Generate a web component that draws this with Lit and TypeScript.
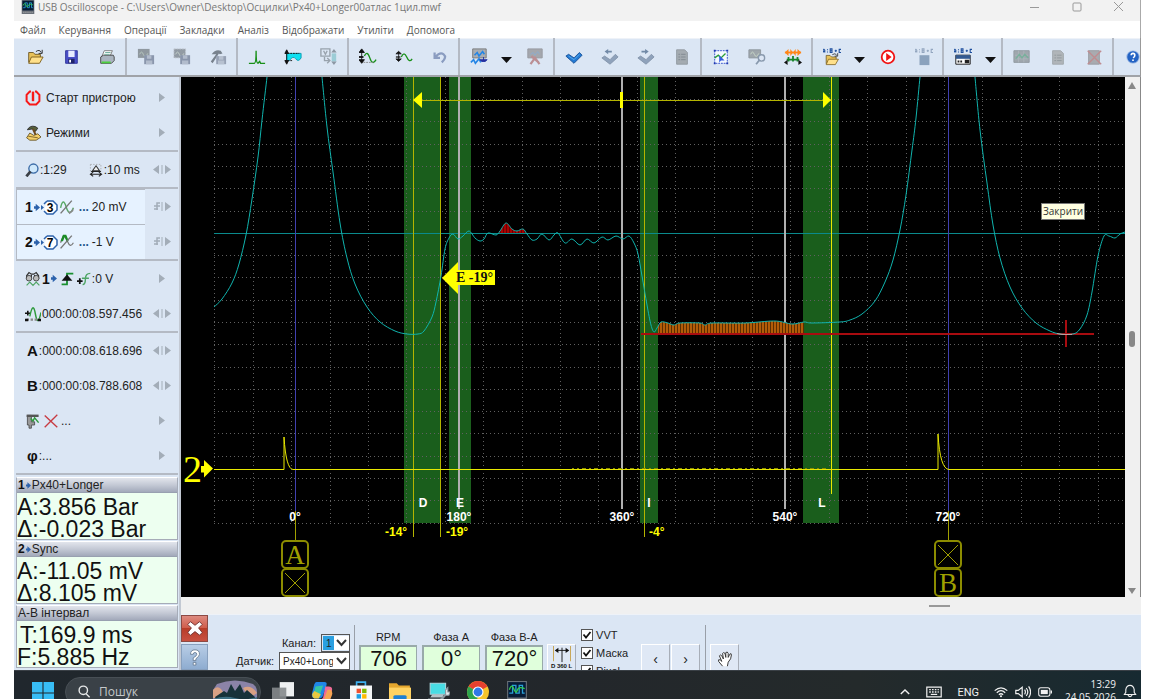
import { LitElement, html, svg, css } from "lit";
import { customElement } from "lit/decorators.js";

type Pt = [number, number];

/* Smooth curve through sample points (Catmull-Rom as cubic Bezier). */
function trace(points: Pt[]): string {
  let d = `M${points[0][0]} ${points[0][1]}`;
  for (let i = 0; i < points.length - 1; i++) {
    const a = points[Math.max(i - 1, 0)];
    const b = points[i];
    const c = points[i + 1];
    const e = points[Math.min(i + 2, points.length - 1)];
    const f = (n: number) => n.toFixed(1);
    d += `C${f(b[0] + (c[0] - a[0]) / 6)} ${f(b[1] + (c[1] - a[1]) / 6)} ${f(c[0] - (e[0] - b[0]) / 6)} ${f(c[1] - (e[1] - b[1]) / 6)} ${c[0]} ${c[1]}`;
  }
  return d;
}

const rise: Pt[] = [[214, 307], [222, 299], [232, 283], [239, 264], [246, 235], [252, 199], [258, 157], [262, 120], [267, 77]];
const cycle: Pt[] = [
  [322, 77], [327, 127], [333, 172], [340, 223], [347, 258], [355, 284], [367, 307], [380, 322], [395, 331], [407, 334],
  [418, 334], [424, 331], [432, 317], [436, 302], [441, 276], [445, 249], [449, 238], [453, 234], [458, 239], [463, 236],
  [469, 231], [475, 238], [480, 241], [484, 239], [488, 233], [496, 235], [500, 231], [506, 223], [512, 229], [517, 231],
  [523, 229], [527, 234], [532, 240], [537, 239], [542, 234], [549, 240], [554, 235], [558, 233], [565, 243], [572, 239],
  [580, 245], [587, 239], [594, 243], [602, 237], [608, 240], [616, 236], [623, 239], [629, 236], [634, 243], [638, 254],
  [642, 276], [647, 305], [651, 325], [654, 332], [657, 328], [661, 322], [668, 323], [674, 325], [680, 323], [700, 323],
  [705, 325], [712, 323], [745, 323], [775, 321], [792, 324], [804, 322], [812, 323], [840, 322], [850, 320], [862, 314],
  [875, 301], [885, 282], [893, 260], [900, 230], [906, 195], [912, 150], [916, 118], [920, 77]];
const next: Pt[] = [
  [975, 77], [980, 130], [987, 183], [993, 225], [1000, 258], [1010, 287], [1022, 308], [1036, 323], [1050, 331], [1060, 334],
  [1073, 334], [1080, 329], [1087, 315], [1092, 292], [1098, 256], [1104, 236], [1109, 236], [1115, 238], [1120, 234], [1125, 232]];

const columns = Array.from({ length: 24 }, (_, i) => 214.3 + i * 38.4);
const rows = Array.from({ length: 20 }, (_, i) => 99.7 + i * 22.28);
const noise = Array.from({ length: 64 }, (_, i) => 572 + i * 4 + ((i * 7) % 3));

const scaleSvg = svg`<path d="M5 3v12M5 1l-3 4h6zM5 17l-3-4h6z" fill="#111" stroke="#111"/><path d="M2 10h5" stroke="#111" stroke-width="2"/>`;
const abc = (c: string) => svg`<g stroke=${c} fill="none" stroke-width="1.2"><path d="M0 5V2.500l1-1 1 1V5M0 4h2M8 5V1h2v4zM8 3h2M13 3h2.500M14.200 2v2.500M20 1.500h-2V5h2"/><path d="M5 1.500v1M5 4v1"/></g>`;

const glyphs: Record<string, unknown> = {
  open: svg`<path d="M3 16V5h5l2 2h6v3" fill="#e8c25a" stroke="#6b5520"/><path d="M3 17l3-7h13l-4 7z" fill="#ffe08a" stroke="#7a5c18"/><path d="M11 4q4-3 6 1m1-3v4h-4" fill="none" stroke="#222"/>`,
  save: svg`<path d="M4 3h13v14H4z" fill="#4a4fc8" stroke="#30349a"/><path d="M7 3h7v7H7z" fill="#e8ecff"/><path d="M7 12h7v5H7z" fill="#20246a"/><path d="M8 13h2v3H8z" fill="#fff"/>`,
  print: svg`<path d="M7 3h9l-3 7H4z" fill="#fff" stroke="#777"/><path d="M3 10l3-2h11l1 2v4l-3 3H3z" fill="#aab4c0" stroke="#444"/><path d="M4 15h10v2H4z" fill="#4bd13c"/><path d="M8 5h6M7 7h6" stroke="#6a9"/>`,
  copyA: svg`<path d="M1 1h13v10H1z" fill="#8f989f"/><path d="M3 7q2-5 4 0t5-1" fill="none" stroke="#b9cabf"/><path d="M8 8h11v10H8z" fill="#8a96ac"/><path d="M11 8h5v4h-5zM10 14h7v4h-7z" fill="#b2bccc"/>`,
  copyB: svg`<path d="M1 1h13v10H1z" fill="#929ba4" stroke="#c3cad2" stroke-dasharray="2 1"/><path d="M3 7q2-5 4 0t5-1" fill="none" stroke="#c6d2cc"/><path d="M8 8h11v10H8z" fill="#8a96ac"/><path d="M11 8h5v4h-5zM10 14h7v4h-7z" fill="#b2bccc"/>`,
  hammer: svg`<path d="M3 7q4-6 10-4l2 3-3 1-1-1L4 17l-2-2 6-8z" fill="#78828d"/><path d="M8 9h11v9H8z" fill="#96a1b4"/><path d="M11 9h5v4h-5zM10 14h7v4h-7z" fill="#b7c1d0"/>`,
  impulse: svg`<path d="M1 17h6q2 0 2-14q0 14 2 14l2-2 1 2h5" fill="none" stroke="#189018" stroke-width="1.500"/>`,
  range: svg`<path d="M3 6h16v5q-3 5-6 1T6 14H3z" fill="#0fe0f0" stroke="#0b9ab0"/><path d="M3 3v14M3 2l-2 4h4zM3 18l-2-4h4z" fill="#111" stroke="#111"/><path d="M1 6h16M1 14h8" stroke="#111" stroke-dasharray="2 1"/>`,
  convert: svg`<path d="M1 1h10v8H1zM5 10v4h5" fill="none" stroke="#98a2ac" stroke-width="1.500"/><path d="M4 3l2 4 2-4M8 11l3 3-3 3" fill="none" stroke="#98a2ac" stroke-width="1.500"/><path d="M13 6h5v9h-5z" fill="#9cccd6"/><path d="M15.500 1l3 4h-6zM15.500 19l3-4h-6z" fill="#8d98a4"/>`,
  stretch: svg`<g transform="translate(-2 0)">${scaleSvg}</g><path d="M6 9q3-7 6 2t7 2" fill="none" stroke="#189018" stroke-width="1.500"/><path d="M5 16h12" stroke="#888" stroke-dasharray="2 1"/>`,
  squeeze: svg`<g transform="translate(-1 3) scale(1 .7)">${scaleSvg}</g><path d="M7 10q3-7 6 0t6 2" fill="none" stroke="#189018" stroke-width="1.500"/>`,
  undo: svg`<path d="M4 5v6h6M5 10q5-6 9-3t-2 9" fill="none" stroke="#8a9cc0" stroke-width="2.500"/>`,
  wave: svg`<path d="M3 1h15v10H3z" fill="#a9adb2" stroke="#777"/><path d="M5 8l3-3 2 4 4-5 2 3" fill="none" stroke="#2385e6" stroke-width="1.800"/><path d="M1 16l3-3 2 4 4-5 2 4" fill="none" stroke="#2385e6" stroke-width="1.800"/><path d="M11 13h8l-2 2h-4zM15 10v4" fill="#2430a0" stroke="#2430a0"/>`,
  waveOff: svg`<path d="M2 1h16v10H2z" fill="#a4a7ad" stroke="#979aa0"/><path d="M5 7l3-2 2 3 3-4 2 3" fill="none" stroke="#8cadcf"/><path d="M5 18l5-7 5 7M6 9l8 7" fill="none" stroke="#bb8f94" stroke-width="2.500"/>`,
  check: svg`<path d="M1 9l3-2 6 4 6-6 3 3-9 9z" fill="#237ad3" stroke="#164f96"/><path d="M4 9l6 4 6-6" fill="none" stroke="#5cabec"/>`,
  checkPrev: svg`<path d="M1 11l3-2 6 4 6-6 3 3-9 8z" fill="#8fa2bb" stroke="#8495ab"/><path d="M4 4l4-3v2h4v2H8v2z" fill="#7189a6"/>`,
  checkNext: svg`<path d="M1 11l3-2 6 4 6-6 3 3-9 8z" fill="#8fa2bb" stroke="#8495ab"/><path d="M13 4L9 1v2H5v2h4v2z" fill="#7189a6"/>`,
  doc: svg`<path d="M4 2h9l3 3v13H4z" fill="#a4abb1" stroke="#929aa2"/><path d="M6 7h2m1 0h5M6 10h2m1 0h5M6 13h2m1 0h5" stroke="#7f8890"/>`,
  select: svg`<path d="M3 3h14v14H3z" fill="#f5f9ff" stroke="#2b48c8" stroke-dasharray="2 1"/><path d="M3 11l4-3 3 3 5-5" fill="none" stroke="#2a9d36" stroke-width="1.500"/><path d="M2 2h2v2H2zM16 2h2v2h-2zM2 16h2v2H2zM16 16h2v2h-2z" fill="#2038b0"/><path d="M8 8v8l2-2h4z" fill="#345cdf"/>`,
  inspect: svg`<path d="M1 2h13v9H1z" fill="#9ea6ab" stroke="#8c959c"/><path d="M3 7q2-5 4 0t5-1" fill="none" stroke="#c8d8c8"/><circle cx="15" cy="11" r="3.500" fill="#dce6f4" stroke="#8899ad" stroke-width="1.500"/><path d="M13 13l-4 5" stroke="#8899ad" stroke-width="2"/>`,
  compare: svg`<path d="M1 5l4-4v8zM19 5l-4-4v8zM10 5L7 1v8zM10 5l3-4v8z" fill="#ff8617"/><path d="M1 5h18" stroke="#ff8617" stroke-width="2"/><path d="M3 13h14M5 10v5M10 9v6M15 10v5" stroke="#168428" stroke-width="2"/><path d="M0 16l4-3v6zM20 16l-4-3v6z" fill="#111"/>`,
  preset: svg`${abc("#1e4f9e")}<g transform="translate(1 4) scale(.85)"><path d="M3 16V5h5l2 2h6v3" fill="#e8c25a" stroke="#6b5520"/><path d="M3 17l3-7h13l-4 7z" fill="#ffe08a" stroke="#7a5c18"/><path d="M11 4q4-3 6 1m1-3v4h-4" fill="none" stroke="#222"/></g>`,
  play: svg`<circle cx="10" cy="10" r="7" fill="#fff" stroke="#f01414" stroke-width="2"/><path d="M8 5.500l6 4.500-6 4.500z" fill="#f01414"/>`,
  stop: svg`${abc("#93a6bf")}<path d="M5 8h11v11H5z" fill="#8ba2bd"/>`,
  calc: svg`${abc("#1e4f9e")}<path d="M2 8h16v10H2z" fill="#fff" stroke="#111"/><path d="M2 8h16v4H2z" fill="#335a92"/><path d="M4 14h2v2H4zM7 14h2v2H7zM12 13h5v4h-5z" fill="#222"/>`,
  chart: svg`<path d="M1 3h17v13H1z" fill="#9fa7ad" stroke="#9099a0"/><path d="M2 8h15M2 12h15M6 3v13M12 3v13" stroke="#adb5bb"/><path d="M3 12l4-5 3 4 3-4 4 4" fill="none" stroke="#78b09c" stroke-width="1.500"/>`,
  page: svg`<path d="M4 3h9l3 3v12H4z" fill="#b0b5b9" stroke="#a0a7ac"/><path d="M6 8h2m1 0h5M6 11h2m1 0h5M6 14h2m1 0h5" stroke="#8e979c"/>`,
  pageOff: svg`<path d="M4 3h12v15H4z" fill="#a8abb0" stroke="#989ca2"/><path d="M3 3l15 15M18 3L3 18" stroke="#bf8c90" stroke-width="1.500"/>`,
  help: svg`<circle cx="10" cy="10" r="7" fill="#2463c4" stroke="#b9cdec"/><path d="M8 8q0-2 2-2t2 2-2 3" fill="none" stroke="#fff" stroke-width="1.800"/><circle cx="10" cy="13.500" r="1" fill="#fff"/>`,
  power: svg`<path d="M7.500 2H6L2 6v8l4 4h8l4-4V6l-4-4h-1.500" fill="none" stroke="#f81818" stroke-width="2.500"/><path d="M10 2v12" stroke="#f81818" stroke-width="3"/>`,
  modes: svg`<path d="M3 6q3-6 10-4l3 2-3 4-4-3z" fill="#57603c" stroke="#222"/><path d="M10 5l4 9" stroke="#6d4a1e" stroke-width="2.500"/><path d="M2 16l4-6 5 3 5-2 4 4-6 4H6z" fill="#f3cf6a" stroke="#5c4718"/><path d="M4 14l12 2" stroke="#6b5520"/>`,
  lens: svg`<circle cx="12" cy="8" r="6.500" fill="#cfe8fb" stroke="#3d6da8" stroke-width="2"/><path d="M8 12l-6 7" stroke="#3a3f46" stroke-width="4"/>`,
  base: svg`<path d="M2 2h15v10H2z" fill="none" stroke="#999" stroke-dasharray="2 2"/><path d="M10 4l5 7H5z" fill="#eee" stroke="#333" stroke-width="1.500"/><path d="M3 12h14M3 16h14M6 13l-4 3 4 3M14 13l4 3-4 3" stroke="#222" stroke-width="1.500" fill="none"/>`,
  sineA: svg`<path d="M2 11Q5-3 9 10t9 1" fill="none" stroke="#58a866" stroke-width="1.800"/><path d="M10 13q3 7 8-2v4l-5 4z" fill="#888"/><path d="M2 18L16 2" stroke="#777" stroke-width="1.800"/>`,
  sineB: svg`<path d="M2 11l3-8h3l3 7q3 8 7 1" fill="none" stroke="#777" stroke-width="1.500"/><path d="M2 9l3-8h4l3 7-2 2-3-6-2 5z" fill="#1b8c27"/><path d="M2 18L16 2" stroke="#777" stroke-width="1.800"/>`,
  search: svg`<path d="M2 10V6l3-4 3 2h3l3-2 3 4v4M8 5v6m4-6v6" fill="none" stroke="#333" stroke-width="1.500"/><circle cx="5" cy="9" r="3.500" fill="#bbb" stroke="#333"/><circle cx="14" cy="9" r="3.500" fill="#bbb" stroke="#333"/><path d="M2 18l4-4 4 4 4-4 4 4" fill="none" stroke="#4fa565" stroke-width="1.500"/>`,
  edge: svg`<path d="M4 16h6V4h7" fill="none" stroke="#1a9030" stroke-width="2"/><path d="M10 5l6 7H4z" fill="#111"/>`,
  level: svg`<path d="M0 13h8M4 9v8" stroke="#111" stroke-width="2.500"/><path d="M8 18q4 0 4-8t7-8M7 9h10" fill="none" stroke="#4fa565" stroke-width="2"/>`,
  position: svg`<path d="M0 9h7M3.500 6v6" stroke="#111" stroke-width="2"/><path d="M6 13q4-20 7-3t7-2" fill="none" stroke="#2e9a3c" stroke-width="1.800"/><path d="M2 17h17" stroke="#888" stroke-width="3" stroke-dasharray="3 2"/><path d="M0 16h4v3H0zM16 16h4v3h-4z" fill="#111"/>`,
  trigger: svg`<path d="M3 3h5v8h4v4H8v4H5v-4H3z" fill="#999" stroke="#444"/><path d="M2 2h15v3H2z" fill="#555"/><path d="M7 7l3 3 2-4 5 6" fill="none" stroke="#2e9a3c" stroke-width="1.800"/>`,
  cross: svg`<path d="M3 4l14 13" stroke="#c73b42" stroke-width="1.500"/><path d="M17 3L3 17" stroke="#c73b42" stroke-width="1.500"/>`,
  phaseSpan: svg`<path d="M0 1v17M20 1v17" stroke="#c6a048" stroke-width="2"/><path d="M10 3v16M3 6h14" stroke="#111"/><path d="M2 6l4-3v6zM18 6l-4-3v6z" fill="#111"/>`,
  hand: svg`<path d="M7 19l-5-6q-1-3 2-2l2 2-3-7q1-2 3 0l2 4-1-7q1-2 3 0l1 5V2q2-2 3 1v5l2-4q2-2 2 1 0 5-4 9l-1 5" fill="#fff" stroke="#333" stroke-width="1.200"/>`,
  closeX: svg`<path d="M5 3l5 4 5-4 3 3-4 4 4 5-3 3-5-4-5 4-3-3 4-5-4-4z" fill="#fff" stroke="#6a3030"/>`,
  question: svg`<path d="M5 7q0-5 5-5t5 5q0 2-4 5v2H8v-3q4-2 4-4t-2-2-2 2z" fill="#fff" stroke="#6b7f96"/><path d="M8 16h3v3H8z" fill="#fff" stroke="#6b7f96"/>`,
  scope: svg`<path d="M1 0h18v20H1z" fill="#6a7078"/><path d="M2 1h16v14H2z" fill="#061b36"/><path d="M3 11h3V4h3v7h3V4h3v7h2" fill="none" stroke="#2aa0d8" stroke-width="1.200"/><path d="M3 8q2-6 4-1t3 2 3-3 4 1" fill="none" stroke="#35cc4d" stroke-width="1.200"/><path d="M3 17.500h14" stroke="#bbb" stroke-dasharray="2 1"/>`,
  windows: svg`<path d="M0 0h9.500v9.500H0zM10.500 0H20v9.500h-9.500zM0 10.500h9.500V20H0zM10.500 10.500H20V20h-9.500z" fill="#38bdf5"/>`,
  taskview: svg`<path d="M7 1h13v13H7z" fill="#eef0f1"/><path d="M0 6h13v12H0z" fill="#85898c" opacity=".9"/>`,
  copilot: svg`<path d="M5 1h7q3 0 2 3l-3 9q-1 3-4 3H3q-3-1-2-5L3 3q1-2 2-2z" fill="#1f86e8"/><path d="M3 10l1-5 7-1-3 9-6 2z" fill="#38c6a2"/><path d="M1 12l2-3 6 3-2 4H3q-2-1-2-4z" fill="#e8c840"/><path d="M13 5h3q4 0 3 4l-3 7q-1 3-4 3H8l3-4z" fill="#ef6a98"/><path d="M12 16l3-8 3 0q2 2 1 5l-2 5z" fill="#f6a453"/>`,
  store: svg`<path d="M6 5V1h8v4" fill="none" stroke="#3cb0ef" stroke-width="1.500"/><path d="M0 4h20v13q0 3-3 3H3q-3 0-3-3z" fill="#f5f7f8"/><path d="M6 7h4v4H6z" fill="#ef5030"/><path d="M11 7h4v4h-4z" fill="#7fba00"/><path d="M6 12h4v4H6z" fill="#1a9fe6"/><path d="M11 12h4v4h-4z" fill="#ffb900"/>`,
  folder: svg`<path d="M0 2h7l2 2h10v15H0z" fill="#e5a72e"/><path d="M0 6h20v13H0z" fill="#ffd262"/><path d="M4 14q0-1 2-1h8q2 0 2 1v5H4z" fill="#1e7fd2"/>`,
  tool: svg`<path d="M2 2h14v10H2z" fill="#49dce4" stroke="#a9d6de"/><path d="M4 12h10v3H2z" fill="#b6c2c8"/><path d="M0 16h12v3H0z" fill="#9cabb4"/><path d="M10 18l6-6 0-4 2-2v4h2l-1 3-3 0-5 6z" fill="#e7edf1" stroke="#8b979f"/>`,
  chrome: svg`<circle cx="10" cy="10" r="10" fill="#f7c52c"/><path d="M10 10L1.400 5A10 10 0 0 1 18.600 5z" fill="#e5402f"/><path d="M10 10L1.400 5A10 10 0 0 0 9 20z" fill="#2da44e"/><circle cx="10" cy="10" r="5" fill="#fff"/><circle cx="10" cy="10" r="4" fill="#3078e8"/>`,
  lensLight: svg`<circle cx="9" cy="9" r="6" fill="none" stroke="#e6e8e9" stroke-width="2"/><path d="M13 14l5 5" stroke="#e6e8e9" stroke-width="2"/>`,
  chevronUp: svg`<path d="M4 13l6-6 6 6" fill="none" stroke="#f0f0f0" stroke-width="2"/>`,
  keyboard: svg`<path d="M1 4h18v12H1z" fill="none" stroke="#f0f0f0" stroke-width="1.500"/><path d="M4 7h12M4 10h12" stroke="#f0f0f0" stroke-width="1.800" stroke-dasharray="2 1.500"/><path d="M6 13h8" stroke="#f0f0f0" stroke-width="1.500"/>`,
  wifi: svg`<path d="M1 8q9-8 18 0M4 11q6-6 12 0M7 14q3-3 6 0" fill="none" stroke="#f0f0f0" stroke-width="1.800"/><circle cx="10" cy="16" r="1.500" fill="#f0f0f0"/>`,
  sound: svg`<path d="M1 8h3l5-4v12l-5-4H1z" fill="none" stroke="#f0f0f0" stroke-width="1.500"/><path d="M12 7q2 3 0 6M14 5q4 5 0 10M17 3q5 7 0 14" fill="none" stroke="#f0f0f0" stroke-width="1.500"/>`,
  battery: svg`<rect x="1" y="4" width="16" height="12" rx="3" fill="none" stroke="#f0f0f0" stroke-width="1.500"/><rect x="4" y="7" width="10" height="6" fill="#f0f0f0"/><path d="M19 8v4" stroke="#f0f0f0" stroke-width="2"/>`,
  bell: svg`<path d="M2 15l2-3V8q1-6 6-6t6 6v4l2 3zM7 16q3 4 6 0" fill="none" stroke="#f0f0f0" stroke-width="1.600"/>`,
};

const icon = (name: string, cls = "i20") =>
  html`<svg class=${cls} viewBox="0 0 20 20" aria-hidden="true">${glyphs[name]}</svg>`;

const toolGroups: string[][] = [
  ["open", "save", "print"],
  ["copyA", "copyB", "hammer"],
  ["impulse", "range", "convert"],
  ["stretch", "squeeze", "undo"],
  ["wave", "drop", "waveOff"],
  ["check", "checkPrev", "checkNext", "doc"],
  ["select", "inspect", "compare"],
  ["preset", "drop", "play", "stop"],
  ["calc", "drop"],
  ["chart", "page", "pageOff"],
  ["help"],
];

@customElement("scope-plot")
class ScopePlot extends LitElement {
  static styles = css`
    :host { display: block; position: relative; min-width: 0; min-height: 0; background: #000; overflow: hidden; }
    .plot { display: block; width: 100%; height: 100%; }
    .grid { stroke: #606060; stroke-width: 1; stroke-dasharray: 1 3; }
    .band { fill: #1a5e1c; }
    .grey { stroke: #b0b0b0; stroke-width: 2; }
    .blue { stroke: #4040b0; stroke-width: 1; }
    .yellow { stroke: #b4b400; stroke-width: 1; }
    .zero { stroke: #0a8a8c; stroke-width: 1; }
    .trace { stroke: #10b4ae; stroke-width: 1; fill: none; }
    .tip { stroke: #b8a0a0; stroke-width: 1; fill: none; }
    .sync { stroke: #e8e800; stroke-width: 1; fill: none; }
    .noise { stroke: #8c8c00; stroke-width: 1; }
    .red { stroke: #a80c10; stroke-width: 2; }
    .solid { fill: #ffff00; }
    .mark { fill: none; stroke: #8c8c00; stroke-width: 2; }
    .thin { fill: none; stroke: #a0a000; stroke-width: 1; }
    .label { font: bold 12px "Liberation Sans", Arial, sans-serif; fill: #fff; text-anchor: middle; }
    .angle { font: bold 12px "Liberation Sans", Arial, sans-serif; fill: #ffff00; }
    .flag { font: bold 14px "Liberation Serif", serif; fill: #111; }
    .letter { font: 27px "Liberation Serif", serif; fill: #a0a000; text-anchor: middle; }
    .channel { font: 38px "Liberation Serif", serif; fill: #ffff00; }
    .tooltip {
      position: absolute; left: 91.100%; top: 24.200%; padding: 0 1px; background: #ffffe1; color: #333;
      border: 1px solid #777; font: 10px/15px "Open Sans", "Noto Sans", sans-serif; box-sizing: border-box;
    }
  `;

  render() {
    const curve = trace(cycle);
    return html`
      <svg class="plot" viewBox="181 77 944 520" preserveAspectRatio="xMidYMid slice" role="img" aria-label="USB Oscilloscope">
        <defs>
          <pattern id="hatch" width="3" height="8" patternUnits="userSpaceOnUse"><rect width="3" height="8" fill="#5c2e00"/><rect width="2" height="8" fill="#b35c08"/></pattern>
          <pattern id="peak" width="3" height="8" patternUnits="userSpaceOnUse"><rect width="3" height="8" fill="#600"/><rect width="2" height="8" fill="#a80000"/></pattern>
          <clipPath id="low"><rect x="658" y="300" width="146" height="33"/></clipPath>
          <clipPath id="high"><rect x="499" y="210" width="29" height="23"/></clipPath>
        </defs>
        ${[[404, 37], [449, 22], [640, 18], [803, 36]].map(([x, w]) => svg`<rect class="band" x=${x} y="77" width=${w} height="446"/>`)}
        ${columns.map((x) => svg`<line class="grid" x1=${Math.round(x) + 0.5} x2=${Math.round(x) + 0.5} y1="77" y2="523"/>`)}
        ${rows.map((y) => svg`<line class="grid" x1="214" x2="1125" y1=${Math.floor(y) + 0.5} y2=${Math.floor(y) + 0.5}/>`)}
        <line class="zero" x1="214" x2="1125" y1="233.500" y2="233.500"/>
        ${[459, 622, 785].map((x) => svg`<line class="grey" x1=${x} x2=${x} y1="77" y2="509"/>`)}
        ${[295.5, 948.5].map((x) => svg`<line class="blue" x1=${x} x2=${x} y1="77" y2="511"/><line class="thin" x1=${x} x2=${x} y1="511" y2="541"/>`)}
        ${[413.5, 440.5, 644.5].map((x) => svg`<line class="yellow" x1=${x} x2=${x} y1="77" y2="537"/>`)}
        <line class="sync" x1="831.500" x2="831.500" y1="77" y2="494"/>
        <path d="${curve} V600 H322Z" fill="url(#hatch)" clip-path="url(#low)"/>
        <path d="${curve} V600 H322Z" fill="url(#peak)" clip-path="url(#high)"/>
        <path class="red" d="M641 334H1094M1066 320V347"/>
        <path class="trace" d=${trace(rise)}/>
        <path class="trace" d=${curve}/>
        <path class="trace" d=${trace(next)}/>
        <path class="tip" d="M1057 333.500L1062 334.500H1072"/>
        <path class="sync" d="M214 469.500H284V437Q286 469 293 469.500H938V434Q940 469 949 469.500H1125"/>
        ${noise.map((x) => svg`<path class="noise" d="M${x} 468.500h2"/>`)}
        <path class="yellow" d="M413 100.500H831"/>
        <path class="solid" d="M413 100l9-8v16zM831 100l-8-8v16zM620 92h3v16h-3z"/>
        <path class="solid" d="M442 278l16-16v8h37v15h-37v9z"/>
        <text class="flag" x="456" y="282">E -19°</text>
        <text class="channel" x="183" y="482">2</text>
        <path class="solid" d="M201 466h3v-6l9 8.500-9 9v-5h-3z"/>
        ${([["D", 423], ["E", 460], ["I", 649], ["L", 822]] as [string, number][]).map(([t, x]) => svg`<text class="label" x=${x} y="507">${t}</text>`)}
        ${([["0°", 295], ["180°", 459], ["360°", 622], ["540°", 785], ["720°", 948]] as [string, number][]).map(([t, x]) => svg`<text class="label" x=${x} y="521">${t}</text>`)}
        ${([["-14°", 385], ["-19°", 446], ["-4°", 649]] as [string, number][]).map(([t, x]) => svg`<text class="angle" x=${x} y="536">${t}</text>`)}
        ${[295, 948].map((x) => svg`<rect class="mark" x=${x - 13} y="541" width="26" height="27" rx="4"/><rect class="mark" x=${x - 13} y="569" width="26" height="27" rx="4"/>`)}
        <text class="letter" x="295" y="564">A</text>
        <path class="thin" d="M285 573l20 20M305 573l-20 20M938 545l20 20M958 545l-20 20"/>
        <text class="letter" x="948" y="592">B</text>
      </svg>
      <div class="tooltip" role="tooltip">Закрити</div>
    `;
  }
}

@customElement("app-root")
class AppRoot extends LitElement {
  static styles = css`
    :host { display: block; background: #fff; font-family: "Liberation Sans", Arial, sans-serif; font-size: 12px; color: #222; }
    * { box-sizing: border-box; }
    button { border: 0; padding: 0; margin: 0; background: none; font: inherit; color: inherit; }
    svg { display: block; flex: none; }
    .i12 { width: 12px; height: 12px; }
    .i14 { width: 14px; height: 14px; }
    .i16 { width: 16px; height: 16px; }
    .i18 { width: 18px; height: 18px; }
    .i20 { width: 20px; height: 20px; }
    .window { height: 100vh; padding: 0 15px 1px 14px; display: grid; grid-template-rows: 21px 17px 39px minmax(0, 1fr) 29px; grid-template-columns: minmax(0, 1fr); overflow: hidden; }
    .titlebar { display: flex; align-items: flex-start; background: #f2f2f2; border-right: 1px solid #aaa; padding-left: 7px; font: 10px/14px "Open Sans", "Noto Sans", sans-serif; color: #777; }
    .title { flex: 1; padding-left: 3px; }
    .caption { width: 42px; height: 14px; display: grid; place-items: center; }
    .stroke { fill: none; stroke: #999; }
    .menu { display: flex; gap: 13px; padding: 0 6px; background: #fff; font: 10px/18px "Open Sans", "Noto Sans", sans-serif; color: #555; border-right: 1px solid #aaa; }
    .menu a { color: inherit; text-decoration: none; }
    .toolbar { display: flex; overflow: hidden; background: #dbe6f4; border-bottom: 2px solid #a0a3a8; border-right: 1px solid #999; padding-left: 2px; box-shadow: inset 0 1px #eef2f8; }
    .group { display: flex; flex: none; padding-left: 1px; border-right: 2px solid #b4bac4; }
    .toolbar .group:last-child { border: 0; }
    .tool { width: 36px; display: grid; place-items: center; }
    .drop { width: 20px; display: grid; place-items: center; padding-top: 4px; }
    .body { display: grid; grid-template-columns: 167px minmax(0, 1fr); min-height: 0; background: #dbe6f4; }
    .side { display: flex; flex-direction: column; padding: 3px 1px 0 2px; border-right: 2px solid #c3c9d3; overflow: hidden; min-height: 0; }
    .section { border-bottom: 2px solid #b4bac4; flex: none; }
    .row { display: flex; align-items: center; height: 35px; padding-left: 9px; font-size: 12px; }
    .row .main { display: flex; align-items: center; flex: 1; gap: 1px; height: 100%; white-space: nowrap; }
    .row.head .main { gap: 5px; }
    .row.on { padding: 0; }
    .row.on .main { background: #e6f2ff; border-top: 1px solid #b4bac4; border-left: 1px solid #b4bac4; padding-left: 8px; }
    .row .arrow { width: 33px; display: grid; place-items: center; flex: none; }
    .push { margin-left: 20px; }
    .big { font: bold 15px "Liberation Sans", Arial, sans-serif; color: #111; padding-left: 2px; }
    .num { font: bold 14px "Liberation Sans", Arial, sans-serif; color: #111; }
    .dots { color: #24568c; font-weight: bold; padding: 0 2px 0 3px; }
    .ring { font: bold 12px "Liberation Sans", Arial, sans-serif; }
    .panes { display: flex; flex-direction: column; gap: 1px; padding-top: 2px; }
    .pane { border: 1px solid #a6acb8; border-top-color: #fff; background: #edfff0; height: 63px; overflow: hidden; }
    .pane h2 { display: flex; align-items: center; gap: 1px; margin: 0; height: 15px; font-size: 12px; font-weight: normal; background: linear-gradient(#e2e5ec, #c4c9d5 50%, #a2a9ba); padding-left: 1px; border-bottom: 1px solid #98a0b0; }
    .pane h2 b { color: #111; }
    .pane h2 svg { width: 5px; }
    .pane p { margin: 0; padding-top: 3px; font-size: 23px; line-height: 22px; color: #111; white-space: nowrap; }
    .pane .inset { display: block; padding-left: 3px; }
    .work { display: grid; grid-template-rows: minmax(0, 1fr) 17px 56px; min-width: 0; min-height: 0; }
    .view { display: grid; grid-template-columns: minmax(0, 1fr) 16px; min-height: 0; }
    .vbar { display: flex; flex-direction: column; align-items: center; justify-content: space-between; background: #f0f0f0; padding: 5px 1px 3px 0; border-right: 1px solid #888; }
    .vthumb { width: 6px; height: 16px; border-radius: 3px; background: #888; }
    .hbar { display: flex; justify-content: flex-end; align-items: center; background: #f0f0f0; padding-right: 191px; }
    .hthumb { width: 21px; height: 2px; background: #999; }
    .controls { display: flex; overflow: hidden; border-top: 1px solid #eef2f8; font-size: 11px; }
    .stack { display: flex; flex-direction: column; gap: 2px; width: 27px; flex: none; }
    .close { height: 27px; display: grid; place-items: center; background: linear-gradient(#dd8a80, #cf5a48 50%, #b83c28 50%, #c85040); border: 1px solid #8c4a44; }
    .ask { height: 27px; display: grid; place-items: center; background: linear-gradient(#b8cde6, #8eacd0); border: 1px solid #88a0be; }
    .fields { display: grid; grid-template-columns: auto 71px; column-gap: 5px; align-content: start; align-items: center; justify-items: end; padding: 19px 4px 0 28px; }
    .combo { display: grid; align-items: center; justify-items: end; height: 18px; }
    .combo > * { grid-area: 1 / 1; }
    .combo svg { margin-right: 3px; pointer-events: none; }
    .combo select { appearance: none; border: 1px solid #555; border-radius: 0; background: #fff; font: 10px "Liberation Sans", Arial, sans-serif; color: #222; padding: 0 16px 0 3px; height: 18px; }
    .combo .wide { width: 71px; }
    .combo .short { width: 29px; background: linear-gradient(90deg, #2a9fe0 12px, #fff 12px); background-clip: content-box; padding: 1px 0 1px 1px; text-indent: 3px; }
    .pair { display: flex; gap: 5px; align-items: center; grid-column: 1 / -1; }
    .rule { width: 1px; margin-top: 10px; background: #999fa8; flex: none; }
    .metrics { display: flex; gap: 5px; padding: 15px 4px 0 4px; }
    .metric { width: 58px; text-align: center; line-height: 15px; white-space: nowrap; }
    .metric output { display: block; height: 32px; background: #e0ffdc; border: 1px solid #9aa; border-width: 2px 1px 1px 2px; font-size: 22px; line-height: 24px; color: #111; }
    .square { width: 29px; height: 30px; border: 1px solid #fff; border-right-color: #a8aeb8; background: #dfe8f5; flex: none; display: grid; place-items: center; font-size: 14px; }
    .span { margin-top: 29px; align-content: start; justify-items: center; font: bold 6px/7px "Liberation Sans", Arial, sans-serif; color: #111; }
    .checks { display: flex; flex-direction: column; gap: 6px; padding: 14px 0 0 5px; width: 65px; flex: none; }
    .checks label { display: flex; align-items: center; gap: 3px; height: 12px; }
    .checks input { appearance: none; margin: 0; width: 12px; height: 12px; border: 1px solid #555; background: #fff; }
    .checks input:checked { background: #fff url("data:image/svg+xml,%3Csvg xmlns='http://www.w3.org/2000/svg' viewBox='0 0 10 10'%3E%3Cpath d='M1.500 4.500l2.500 3L8.500 2' fill='none' stroke='%23111' stroke-width='1.800'/%3E%3C/svg%3E"); }
    .steps { display: flex; gap: 1px; padding: 29px 5px 0 0; }
    .hand { margin: 29px 0 0 4px; }
    .taskbar { display: flex; align-items: flex-start; height: 29px; overflow: hidden; background: linear-gradient(90deg, #20272d, #23272b 50%, #242a2b 75%, #172a31); border-top: 1px solid #3a4046; padding: 0 4px 0 18px; }
    .taskbar .win { margin: 11px 11px 0 0; }
    .i22 { width: 22px; height: 22px; }
    .searchbox { display: flex; align-items: center; width: 196px; height: 30px; margin-top: 6px; border-radius: 15px; background: #3a4147; border: 1px solid #484f55; padding: 0 3px 2px 11px; gap: 8px; color: #c4c8ca; font: 12px "Open Sans", "Noto Sans", sans-serif; }
    .searchbox input { flex: 1; min-width: 0; border: 0; padding: 0; background: none; color: inherit; font: inherit; outline: none; }
    .searchbox input::placeholder { color: #c4c8ca; opacity: 1; }
    .scene { width: 44px; height: 22px; }
    .apps { display: flex; gap: 17px; padding: 10px 0 0 11px; flex: 1; }
    .tray { display: flex; gap: 7px; align-items: center; padding-top: 12px; height: 30px; color: #f0f0f0; font: 11px/17px Roboto, "Noto Sans", sans-serif; }
    .lang { padding: 0 8px; }
    .clock { text-align: right; font: 10px/13px "Open Sans", "Noto Sans", sans-serif; color: #f0f0f0; padding: 7px 7px 0 13px; }
    .bell { padding-top: 13px; }
  `;

  private tool(name: string) {
    return name === "drop"
      ? html`<button class="drop" aria-label="▼"><svg class="i12" viewBox="0 0 12 12"><path d="M0 4h11L5.500 10z" fill="#111"/></svg></button>`
      : html`<button class="tool" aria-label=${name}>${icon(name, "i18")}</button>`;
  }

  private arrow(kind: "one" | "both" | "step") {
    const shapes = {
      one: svg`<path d="M6 2v9l6-4.500z" fill="#a3adb8"/>`,
      both: svg`<path d="M6 2v9L0 6.500zM12 2v9l6-4.500zM8.500 2h1v9h-1z" fill="#a3adb8"/>`,
      step: svg`<path d="M12 2v9l6-4.500zM8.500 2h1v9h-1z" fill="#a3adb8"/><path d="M7 3H4v7M1 6h6M1 9h4" stroke="#a3adb8" stroke-width="1.500" fill="none"/>`,
    };
    return html`<button class="arrow" aria-label="▶"><svg width="18" height="13" viewBox="0 0 18 13">${shapes[kind]}</svg></button>`;
  }

  private tick() {
    return html`<svg width="6" height="9" viewBox="0 0 7 9"><path d="M0 3h2V0l5 4.500L2 9V6H0z" fill="#2c62ac"/></svg>`;
  }

  private ring(n: string) {
    return html`<svg width="17" height="17" viewBox="0 0 17 17"><path d="M6 2h6l4 4v5l-4 4H6l-3-3M3 5l3-3" fill="#fff" stroke="#2c62ac" stroke-width="1.500"/><path d="M0 6l3 2.500L0 11z" fill="#2c62ac"/><text class="ring" x="9" y="13" text-anchor="middle">${n}</text></svg>`;
  }

  private caret() {
    return html`<svg width="11" height="8" viewBox="0 0 11 8"><path d="M1 1l4.500 5L10 1" fill="none" stroke="#333" stroke-width="2"/></svg>`;
  }

  render() {
    return html`
      <div class="window">
        <header class="titlebar">
          ${icon("scope", "i14")}
          <span class="title">USB Oscilloscope - C:\\Users\\Owner\\Desktop\\Осцилки\\Px40+Longer00атлас 1цил.mwf</span>
          <button class="caption" aria-label="—"><svg class="stroke" width="10" height="10"><path d="M0 5.500h9"/></svg></button>
          <button class="caption" aria-label="□"><svg class="stroke" width="10" height="10"><rect x="1" y="1" width="8" height="8" rx="1"/></svg></button>
          <button class="caption" aria-label="×"><svg class="stroke" width="10" height="10"><path d="M0 0l9 9M9 0L0 9"/></svg></button>
        </header>
        <nav class="menu">
          ${["Файл", "Керування", "Операції", "Закладки", "Аналіз", "Відображати", "Утиліти", "Допомога"].map((m) => html`<a href="#">${m}</a>`)}
        </nav>
        <div class="toolbar">${toolGroups.map((g) => html`<div class="group">${g.map((n) => this.tool(n))}</div>`)}</div>
        <div class="body">
          <aside class="side">
            <div class="section">
              <div class="row head"><div class="main">${icon("power", "i16")}<span>Старт пристрою</span></div>${this.arrow("one")}</div>
              <div class="row head"><div class="main">${icon("modes", "i16")}<span>Режими</span></div>${this.arrow("one")}</div>
            </div>
            <div class="section">
              <div class="row"><div class="main">${icon("lens", "i14")}<span>:1:29</span><span class="push"></span>${icon("base", "i14")}<span>:10 ms</span></div>${this.arrow("both")}</div>
            </div>
            <div class="section">
              <div class="row on"><div class="main"><span class="num">1</span>${this.tick()}${this.ring("3")}${icon("sineA", "i16")}<span class="dots">...</span><span>20 mV</span></div>${this.arrow("step")}</div>
              <div class="row on"><div class="main"><span class="num">2</span>${this.tick()}${this.ring("7")}${icon("sineB", "i16")}<span class="dots">...</span><span>-1 V</span></div>${this.arrow("step")}</div>
            </div>
            <div class="section">
              <div class="row"><div class="main">${icon("search", "i16")}<span class="num">1</span>${this.tick()}${icon("edge", "i18")}${icon("level", "i14")}<span>:0 V</span></div>${this.arrow("one")}</div>
              <div class="row"><div class="main">${icon("position", "i16")}<span>000:00:08.597.456</span></div>${this.arrow("both")}</div>
            </div>
            <div class="section">
              <div class="row"><div class="main"><span class="big">A</span><span>:000:00:08.618.696</span></div>${this.arrow("both")}</div>
              <div class="row"><div class="main"><span class="big">B</span><span>:000:00:08.788.608</span></div>${this.arrow("both")}</div>
              <div class="row"><div class="main">${icon("trigger", "i16")}${icon("cross", "i18")}<span>...</span></div>${this.arrow("one")}</div>
              <div class="row"><div class="main"><span class="big">φ</span><span>:...</span></div>${this.arrow("one")}</div>
            </div>
            <div class="panes">
              <section class="pane"><h2><b>1</b>${this.tick()}Px40+Longer</h2><p>A:3.856 Bar<br>Δ:-0.023 Bar</p></section>
              <section class="pane"><h2><b>2</b>${this.tick()}Sync</h2><p>A:-11.05 mV<br>Δ:8.105 mV</p></section>
              <section class="pane"><h2>A-B інтервал</h2><p><span class="inset">T:169.9 ms</span>F:5.885 Hz</p></section>
            </div>
          </aside>
          <main class="work">
            <div class="view">
              <scope-plot></scope-plot>
              <div class="vbar">
                <svg width="8" height="7"><path d="M4 0l4 7H0z" fill="#888"/></svg>
                <span class="vthumb"></span>
                <svg width="8" height="6"><path d="M4 6l4-6H0z" fill="#888"/></svg>
              </div>
            </div>
            <div class="hbar"><span class="hthumb"></span></div>
            <div class="controls">
              <div class="stack">
                <button class="close" aria-label="Закрити">${icon("closeX", "i18")}</button>
                <button class="ask" aria-label="?">${icon("question", "i18")}</button>
              </div>
              <div class="fields">
                <div class="pair"><label for="ch">Канал:</label><span class="combo"><select id="ch" class="short"><option>1</option></select>${this.caret()}</span></div>
                <label for="sensor">Датчик:</label><span class="combo"><select id="sensor" class="wide"><option>Px40+Longer</option></select>${this.caret()}</span>
              </div>
              <span class="rule"></span>
              <div class="metrics">
                <div class="metric"><label for="rpm">RPM</label><output id="rpm">706</output></div>
                <div class="metric"><label for="pa">Фаза A</label><output id="pa">0°</output></div>
                <div class="metric"><label for="pb">Фаза B-A</label><output id="pb">720°</output></div>
              </div>
              <button class="square span">${icon("phaseSpan", "i18")}<span>D 360 L</span></button>
              <div class="checks">
                <label><input type="checkbox" checked>VVT</label>
                <label><input type="checkbox" checked>Маска</label>
                <label><input type="checkbox" checked>Pixel</label>
              </div>
              <div class="steps">
                <button class="square">‹</button>
                <button class="square">›</button>
              </div>
              <span class="rule"></span>
              <button class="square hand" aria-label="hand">${icon("hand", "i16")}</button>
            </div>
          </main>
        </div>
        <footer class="taskbar">
          <button class="win" aria-label="Windows">${icon("windows", "i22")}</button>
          <label class="searchbox">
            ${icon("lensLight", "i14")}<input type="search" placeholder="Пошук" aria-label="Пошук">
            <svg class="scene" viewBox="0 0 44 22"><path d="M4 4q18-7 36 0 4 3 4 8v10H0V10z" fill="#8b83a8"/><path d="M0 10q4-5 8-1l4 6-8 3H0zM30 8q8-4 14 5l-8 5z" fill="#d9a184"/><path d="M2 17l9-6 3 2 4-9 4 7 5-7 4 9 3-3 8 7v5H4z" fill="#183239"/><path d="M0 19q12-4 22-1t22-1v5H0z" fill="#3e6f82"/></svg>
          </label>
          <div class="apps">
            ${["taskview", "copilot", "store", "folder", "tool", "chrome", "scope"].map((n) => html`<button aria-label=${n}>${icon(n, "i22")}</button>`)}
          </div>
          <div class="tray">
            ${icon("chevronUp", "i14")}<span></span>${icon("keyboard", "i16")}<span class="lang">ENG</span>${icon("wifi", "i14")}${icon("sound", "i16")}${icon("battery", "i14")}
          </div>
          <time class="clock">13:29<br>24.05.2026</time>
          <span class="bell">${icon("bell", "i14")}</span>
        </footer>
      </div>
    `;
  }
}
